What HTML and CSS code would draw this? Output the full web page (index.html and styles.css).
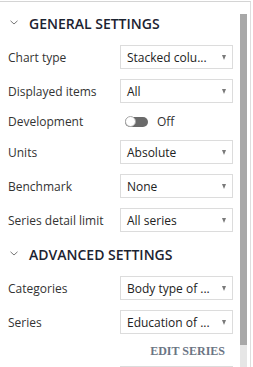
FILE: index.html
```html
<!DOCTYPE html>
<html lang="en">
<head>
  <meta charset="UTF-8">
  <title>Chart settings</title>
  <link rel="stylesheet" href="styles.css">
</head>
<body>

  <div class="panel">
    <div class="content">

      <!-- general -->
      <h3 class="section-title">
        <svg class="chevron" width="8" height="5" viewBox="0 0 8 5"><polyline points="0.5,0.8 4,4 7.5,0.8" fill="none" stroke="#777" stroke-width="1"/></svg>
        GENERAL SETTINGS
      </h3>
      <div class="fields">
        <div class="label">Chart type</div>
        <div class="select"><span>Stacked colu...</span><i class="arrow"></i></div>

        <div class="label">Displayed items</div>
        <div class="select"><span>All</span><i class="arrow"></i></div>

        <div class="label">Development</div>
        <div class="toggle-wrap"><span class="toggle"><span class="knob"></span></span><span>Off</span></div>

        <div class="label">Units</div>
        <div class="select"><span>Absolute</span><i class="arrow"></i></div>

        <div class="label">Benchmark</div>
        <div class="select"><span>None</span><i class="arrow"></i></div>

        <div class="label">Series detail limit</div>
        <div class="select"><span>All series</span><i class="arrow"></i></div>
      </div>

      <!-- advanced -->
      <h3 class="section-title advanced">
        <svg class="chevron" width="8" height="5" viewBox="0 0 8 5"><polyline points="0.5,0.8 4,4 7.5,0.8" fill="none" stroke="#777" stroke-width="1"/></svg>
        ADVANCED SETTINGS
      </h3>
      <div class="fields">
        <div class="label">Categories</div>
        <div class="select"><span>Body type of ...</span><i class="arrow"></i></div>

        <div class="label">Series</div>
        <div class="select"><span>Education of ...</span><i class="arrow"></i></div>
      </div>
      <div class="edit-link">EDIT SERIES</div>
      <div class="fields">
        <div class="label"></div>
        <div class="select"></div>
      </div>

    </div>
    <div class="scrollbar">
      <div class="thumb"></div>
      <div class="track"></div>
    </div>
  </div>

</body>
</html>
```

FILE: styles.css
```css
body {
  margin: 0;
  background: white;
  font-family: 'Open Sans', 'Noto Sans', sans-serif;
  font-size: 12px;
  color: #333;
}

.panel {
  display: flex;
  width: 250px;
  height: 365px;
  margin-top: 1px;
  border-top: 1px solid #d4d4d4;
  border-right: 1px solid #dedede;
  overflow: hidden;
}

.content {
  width: 240px;
  flex-shrink: 0;
}

.section-title {
  display: flex;
  align-items: center;
  margin: 0;
  padding: 11px 0 11px 10px;
  font-size: 14px;
  line-height: 21px;
  font-weight: 600;
  color: #1c2331;
}

.section-title.advanced {
  padding-top: 12px;
}

.chevron {
  margin-right: 11px;
  margin-top: -2px;
}

.fields {
  display: grid;
  grid-template-columns: 112px 113px;
  row-gap: 10px;
  align-items: center;
  padding-left: 8px;
}

.label {
  white-space: nowrap;
}

.select {
  box-sizing: border-box;
  height: 24px;
  display: flex;
  align-items: center;
  justify-content: space-between;
  padding: 0 6px;
  border: 1px solid #dcdcdc;
  background: white;
  color: #222;
  white-space: nowrap;
}

.arrow {
  width: 0;
  height: 0;
  border-left: 2.5px solid transparent;
  border-right: 2.5px solid transparent;
  border-top: 5px solid #7a7a7a;
}

.toggle-wrap {
  height: 16px;
  display: flex;
  align-items: center;
  gap: 9px;
  padding-left: 5px;
}

.toggle {
  width: 23px;
  height: 10px;
  border-radius: 5px;
  background: #6a6a6a;
  display: flex;
  align-items: center;
}

.knob {
  box-sizing: border-box;
  width: 11px;
  height: 11px;
  border-radius: 50%;
  background: white;
  border: 1px solid #aaa;
}

.edit-link {
  padding: 7px 15px 5px 0;
  text-align: right;
  font-family: 'Liberation Serif', serif;
  font-weight: bold;
  font-size: 12px;
  line-height: 20px;
  color: #6b7584;
}

.scrollbar {
  width: 7px;
  margin-top: 12px;
  display: flex;
  flex-direction: column;
}

.thumb {
  height: 331px;
  background: #a8a8a8;
}

.track {
  flex: 1;
  background: #e6e6e6;
}
```
